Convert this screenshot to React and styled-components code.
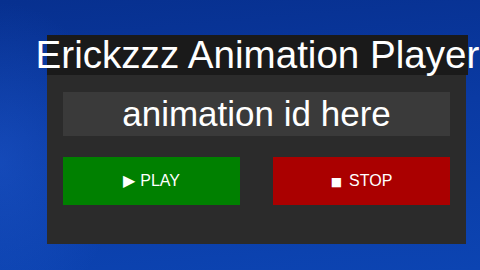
import React from 'react'
import styled, { createGlobalStyle } from 'styled-components'

const GlobalStyle = createGlobalStyle`
html, body {
  margin: 0;
  padding: 0;
  width: 480px;
  height: 270px;
  overflow: hidden;
}
body {
  font-family: 'Liberation Sans', Arial, sans-serif;
}
`

const Desktop = styled.div`
width: 480px;
height: 270px;
box-sizing: border-box;
padding: 35px 0 0 47px;
background:
  radial-gradient(ellipse 120px 160px at 0% 60%, rgba(40, 100, 220, 0.35), transparent),
  linear-gradient(175deg, #07308f 0%, #0a3aa3 45%, #0c44b2 100%);
`

const Window = styled.div`
width: 419px;
height: 209px;
background: #2b2b2b;
display: flex;
flex-direction: column;
`

const TitleBar = styled.div`
height: 40px;
width: 421px;
background: #1a1a1a;
display: flex;
justify-content: center;
align-items: center;
overflow: visible;
`

const Title = styled.h1`
margin: 0;
font-family: 'Liberation Sans', Arial, sans-serif;
font-weight: 400;
font-size: 38.6px;
line-height: 40px;
color: #ffffff;
white-space: nowrap;
flex-shrink: 0;
`

const Body = styled.div`
padding: 17px 16px 0 16px;
display: flex;
flex-direction: column;
gap: 21px;
`

const IdInput = styled.input`
height: 44px;
width: 100%;
box-sizing: border-box;
border: none;
outline: none;
background: #3a3a3a;
color: #ffffff;
text-align: center;
font-family: 'Liberation Sans', Arial, sans-serif;
font-size: 35px;
padding: 0;
&::placeholder {
  color: #ffffff;
  opacity: 1;
}
`

const ButtonRow = styled.div`
display: flex;
justify-content: space-between;
`

const ActionButton = styled.button`
width: 177px;
height: 48px;
border: none;
background: ${props => props.color};
color: #ffffff;
font-family: 'Liberation Sans', Arial, sans-serif;
font-size: 16px;
line-height: 48px;
text-align: center;
padding: 0;
cursor: pointer;
`

const Glyph = styled.span`
font-family: 'DejaVu Sans', sans-serif;
font-size: ${props => props.size};
margin-right: ${props => props.space};
`

const App = () => {
  return (
    <>
      <GlobalStyle />
      <Desktop>
        <Window>
          <TitleBar>
            <Title>Erickzzz Animation Player</Title>
          </TitleBar>
          <Body>
            <IdInput placeholder="animation id here" />
            <ButtonRow>
              <ActionButton color="#008000">
                <Glyph size="16px" space="5px">▶</Glyph>PLAY
              </ActionButton>
              <ActionButton color="#aa0000">
                <Glyph size="12px" space="7px">■</Glyph>STOP
              </ActionButton>
            </ButtonRow>
          </Body>
        </Window>
      </Desktop>
    </>
  )
}

export default App
